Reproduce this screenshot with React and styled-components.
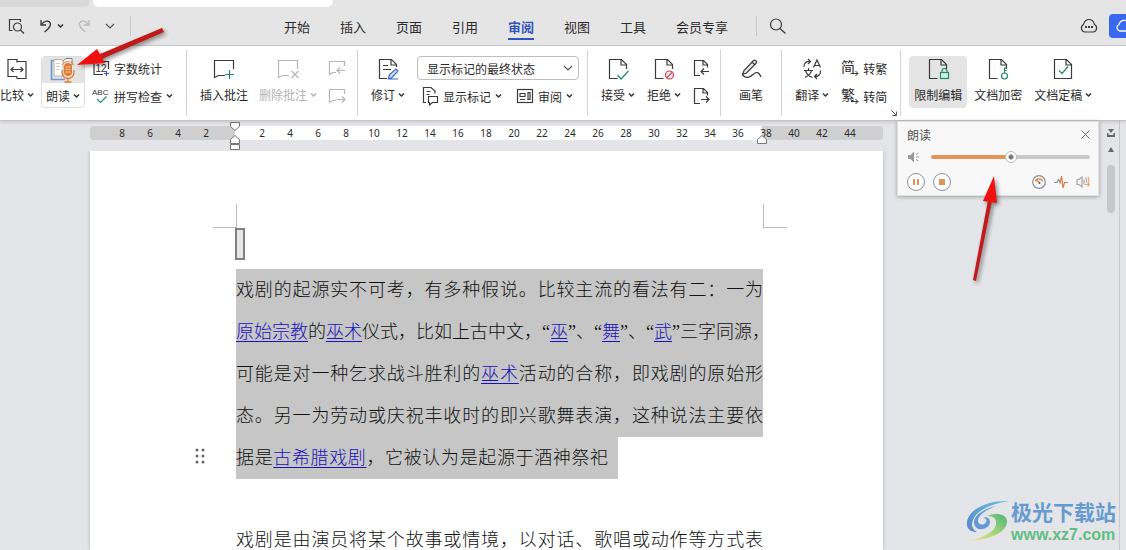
import React, { useState } from 'react'
import styled, { createGlobalStyle, css } from 'styled-components'

const Global = createGlobalStyle`
  * {
    box-sizing: border-box;
  }
  body {
    margin: 0;
    font-family: 'Noto Sans CJK SC', sans-serif;
    font-size: 12px;
    color: #2b2b2b;
    background: #e4e5e8;
  }
  button, select, input {
    font: inherit;
    color: inherit;
    margin: 0;
  }
  svg {
    flex: none;
  }
`

const Window = styled.div`
  position: relative;
  display: flex;
  flex-direction: column;
  width: 100%;
  height: 100vh;
  overflow: hidden;
`

/* ---------- title strip ---------- */
const TitleStrip = styled.div`
  display: flex;
  gap: 3px;
  height: 7px;
  background: #e6e5e6;
`
const DocTab = styled.div`
  width: ${(p) => p.$width}px;
  height: 7px;
  background: ${(p) => (p.$active ? '#fff' : '#d9d9da')};
  border-radius: 0 0 6px ${(p) => (p.$active ? 6 : 0)}px;
`

/* ---------- menu row ---------- */
const MenuBar = styled.header`
  display: flex;
  align-items: center;
  height: 39px;
  background: #e6e5e6;
  border-bottom: 1px solid #cbcbcc;
`
const QuickAccess = styled.div`
  display: flex;
  align-items: center;
  width: 269px;
  padding-left: 8px;
`
const IconButton = styled.button`
  display: flex;
  align-items: center;
  justify-content: center;
  flex: none;
  width: ${(p) => p.$width || 18}px;
  height: 18px;
  padding: 0;
  border: 0;
  background: none;
  cursor: pointer;
  margin-right: ${(p) => p.$after || 0}px;
`
const MenuDivider = styled.span`
  width: 1px;
  height: 20px;
  background: #c6c6c7;
`
const Tabs = styled.nav`
  display: flex;
  align-items: stretch;
  height: 38px;
`
const Tab = styled.a`
  display: flex;
  align-items: center;
  position: relative;
  padding: 0 15px;
  font-size: 13px;
  white-space: nowrap;
  color: #2b2b2b;
  text-decoration: none;
  ${(p) =>
    p.$active &&
    css`
      color: #3156b8;
      font-weight: 700;
      &::after {
        content: '';
        position: absolute;
        left: 15px;
        right: 15px;
        bottom: 5px;
        height: 2px;
        background: #3156b8;
      }
    `}
`
const MenuRight = styled.div`
  display: flex;
  align-items: center;
  margin-left: auto;
`
const CloudButton = styled.button`
  display: flex;
  align-items: center;
  width: 17px;
  height: 24px;
  padding: 0 0 0 6px;
  overflow: hidden;
  border: 0;
  border-radius: 4px 0 0 4px;
  background: #3a68f0;
`

/* ---------- ribbon ---------- */
const Ribbon = styled.div`
  position: relative;
  z-index: 2;
  display: flex;
  flex: none;
  height: 75px;
  padding-top: 4px;
  background: #fff;
  border-bottom: 1px solid #c4c4c6;
  box-shadow: 0 1px 3px rgba(0, 0, 0, 0.14);
`
const Group = styled.div`
  display: flex;
  position: relative;
  flex: none;
  height: 66px;
  gap: ${(p) => p.$gap || 12}px;
  padding: 6px ${(p) => (p.$end === undefined ? 13 : p.$end)}px 0 ${(p) => (p.$start === undefined ? 13 : p.$start)}px;
  border-right: ${(p) => (p.$last ? 0 : 1)}px solid #d2d2d2;
`
const BigButton = styled.button`
  display: flex;
  flex-direction: column;
  align-items: center;
  height: 52px;
  padding: 0 ${(p) => p.$pad || 0}px;
  border: 0;
  border-radius: 4px;
  background: ${(p) => (p.$pressed ? '#e4e4e4' : 'none')};
  color: ${(p) => (p.disabled ? '#b3b3b3' : '#2b2b2b')};
  white-space: nowrap;
`
const SplitButton = styled(BigButton)`
  width: 44px;
  border: 1px solid #dedede;
  padding: 0;
  overflow: hidden;
`
const IconSlot = styled.span`
  display: flex;
  align-items: center;
  justify-content: center;
  width: 100%;
  height: 27px;
  background: ${(p) => (p.$shaded ? '#e4e4e4' : 'none')};
`
const LabelRow = styled.span`
  display: flex;
  align-items: center;
  gap: 3px;
  height: 26px;
  line-height: 26px;
`
const Stack = styled.div`
  display: flex;
  flex-direction: column;
  gap: 4px;
`
const StackRow = styled.div`
  display: flex;
  align-items: center;
  gap: ${(p) => p.$gap || 0}px;
  height: 24px;
`
const SmallButton = styled.button`
  display: flex;
  align-items: center;
  gap: 4px;
  height: 24px;
  padding: 0;
  border: 0;
  background: none;
  white-space: nowrap;
`
const SelectBox = styled.div`
  position: relative;
  width: 162px;
  height: 24px;
  svg {
    position: absolute;
    right: 6px;
    top: 8px;
    pointer-events: none;
  }
`
const Select = styled.select`
  appearance: none;
  width: 100%;
  height: 24px;
  padding: 0 20px 0 9px;
  border: 1px solid #bdbdbd;
  border-radius: 4px;
  background: #fff;
`
const Launcher = styled.button`
  position: absolute;
  right: 3px;
  bottom: 0;
  display: flex;
  padding: 0;
  border: 0;
  background: none;
`

/* ---------- workspace ---------- */
const Workspace = styled.main`
  display: grid;
  grid-template-columns: 90px minmax(0, 793px) minmax(202px, 1fr) 17px 6px;
  flex: 1;
  min-height: 0;
  background: #e4e5e8;
`
const Editor = styled.div`
  grid-column: 2;
  display: flex;
  flex-direction: column;
  min-height: 0;
`
const Ruler = styled.div`
  position: relative;
  display: flex;
  align-items: center;
  flex: none;
  height: 14px;
  margin: 5px 0 11px;
  padding-left: 18px;
  border-radius: 4px;
  background: linear-gradient(to right, #cfcfcf 145px, #fff 145px, #fff calc(100% - 121px), #cfcfcf calc(100% - 121px));
`
const Tick = styled.span`
  flex: none;
  width: 28px;
  text-align: center;
  font: 10px/14px 'Noto Sans', sans-serif;
`
const Marker = styled.svg`
  position: absolute;
  top: -5px;
  ${(p) => (p.$right ? 'right: 115px' : 'left: 139px')};
`
const Page = styled.article`
  position: relative;
  flex: 1;
  min-height: 0;
  padding: 53px 120px 0 146px;
  background: #fff;
  box-shadow: 0 0 4px rgba(0, 0, 0, 0.22);
  clip-path: inset(0 -6px 0 -6px);
`
const Corners = styled.div`
  display: flex;
  justify-content: space-between;
  height: 24px;
  margin: 0 -24px 0 -23px;
`
const Corner = styled.span`
  width: 24px;
  border-bottom: 1px solid #b9b9b9;
  ${(p) => (p.$right ? 'border-left' : 'border-right')}: 1px solid #b9b9b9;
`
const FieldBox = styled.div`
  width: 10px;
  height: 32px;
  margin: 0 0 9px -1px;
  border: 2px solid #808080;
  background: #e8e8e8;
`
const Paragraph = styled.p`
  margin: 0 0 40px;
  font-family: 'Liberation Serif', 'Noto Sans CJK SC', serif;
  font-size: 18px;
  font-weight: 300;
  line-height: 42px;
  color: #111;
`
const Line = styled.span`
  display: block;
  height: 42px;
  width: ${(p) => (p.$short ? '72.5%' : '100%')};
  padding-right: ${(p) => (p.$short ? 10 : 0)}px;
  text-align: justify;
  text-align-last: justify;
  white-space: nowrap;
  background: ${(p) => (p.$selected ? '#c6c6c6' : 'none')};
`
const DocLink = styled.a`
  color: #1a12b8;
  text-decoration: underline;
  text-decoration-thickness: 1px;
  text-underline-offset: 3px;
`
const DragHandle = styled.svg`
  position: absolute;
  left: 105px;
  top: 297px;
`

/* ---------- read aloud panel ---------- */
const Panel = styled.section`
  position: relative;
  z-index: 3;
  grid-column: 3;
  width: 202px;
  height: 75px;
  margin-left: 14px;
  padding: 4px 8px 0 9px;
  background: #f8f8f8;
  border: 1px solid #e0e0e0;
  box-shadow: 0 1px 4px rgba(0, 0, 0, 0.3);
  color: #555;
`
const PanelRow = styled.div`
  display: flex;
  align-items: center;
  height: ${(p) => p.$height}px;
  gap: ${(p) => p.$gap || 0}px;
`
const PanelTitle = styled.span`
  flex: 1;
`
const Slider = styled.input`
  appearance: none;
  flex: 1;
  min-width: 0;
  height: 12px;
  background: none;
  &::-webkit-slider-runnable-track {
    height: 4px;
    border-radius: 2px;
    background: linear-gradient(to right, #e2935a 50%, #c9c9c9 50%);
  }
  &::-webkit-slider-thumb {
    appearance: none;
    width: 12px;
    height: 12px;
    margin-top: -4px;
    border: 1px solid #bcbcbc;
    border-radius: 50%;
    background: radial-gradient(circle, #777 2px, #fff 3px);
  }
`
const RoundButton = styled.button`
  display: flex;
  align-items: center;
  justify-content: center;
  width: 18px;
  height: 18px;
  padding: 0;
  border: 1px solid #8a8f9a;
  border-radius: 50%;
  background: #fff;
`
const Spacer = styled.span`
  flex: 1;
`

const ScrollColumn = styled.div`
  grid-column: 4;
  display: flex;
  flex-direction: column;
  align-items: center;
  padding-top: 7px;
  border-right: 1px solid #c9cacd;
`
const ScrollThumb = styled.span`
  width: 8px;
  height: 48px;
  margin-top: 11px;
  border-radius: 4px;
  background: #c6c7c9;
`

/* ---------- overlays ---------- */
const ArrowLayer = styled.svg`
  position: absolute;
  z-index: 5;
  left: ${(p) => p.$x}px;
  top: ${(p) => p.$y}px;
  pointer-events: none;
  overflow: visible;
  filter: drop-shadow(2px 2px 2px rgba(0, 0, 0, 0.45));
`
const Watermark = styled.div`
  position: absolute;
  z-index: 4;
  right: 10px;
  bottom: 5px;
  display: flex;
  align-items: center;
`
const WatermarkText = styled.div`
  display: flex;
  flex-direction: column;
`
const SiteName = styled.span`
  font-size: 21px;
  font-weight: 700;
  line-height: 28px;
  color: #659bd0;
`
const SiteUrl = styled.span`
  font: 700 16px/20px 'Liberation Sans', sans-serif;
  color: #62bd85;
`

/* ---------- icons ---------- */
const Icon = ({ size = 24, color = '#3a3a3a', children }) => (
  <svg width={size} height={size} viewBox={`0 0 ${size} ${size}`} fill="none" stroke={color} strokeWidth="1.2">
    {children}
  </svg>
)
const Caret = ({ color = '#333' }) => (
  <svg width="7" height="6" viewBox="0 0 7 6" fill="none" stroke={color} strokeWidth="1.5">
    <path d="M1 1.5 3.5 4 6 1.5" />
  </svg>
)
const Chevron = () => (
  <svg width="10" height="8" viewBox="0 0 10 8" fill="none" stroke="#555" strokeWidth="1.2">
    <path d="M1 2l4 4 4-4" />
  </svg>
)
const DocOutline = () => (
  <>
    <path d="M11.5 21.5H3.5V2.5H15.5L20.5 7.5V12" />
    <path d="M15 2.5V8H20.5" />
  </>
)
const BubbleSmall = ({ next }) => (
  <Icon size={18} color="#b5b5b5">
    <path d="M16.5 7V2.5H1.5V15.5L4.5 13.5H8" />
    {next ? <path d="M9 12.5h8M14 9.5l3 3-3 3" /> : <path d="M17 11.5H9M12 8.5l-3 3 3 3" />}
  </Icon>
)
const PageSmall = ({ next }) => (
  <Icon size={18}>
    <path d="M7 16.5H1.5V1.5H10.5L14.5 5.5V8.5M10 1.5V6H14.5" />
    {next ? <path d="M8 12.5h8M13 9.5l3 3-3 3" /> : <path d="M16 12.5H8M11 9.5l-3 3 3 3" />}
  </Icon>
)
const HanArrow = ({ char }) => (
  <svg width="18" height="18" viewBox="0 0 18 18" fill="none" overflow="visible">
    <text x="0" y="13" fontSize="14" fill="#2b2b2b" fontFamily="Noto Sans CJK SC">
      {char}
    </text>
    <path d="M10 14.5h7M14.5 12l2.5 2.5-2.5 2.5" stroke="#333" />
  </svg>
)

const tabs = ['开始', '插入', '页面', '引用', '审阅', '视图', '工具', '会员专享']
const ticks = [8, 6, 4, 2, '', ...Array.from({ length: 22 }, (_, i) => (i + 1) * 2)]

const Tool = ({ icon, label, caret, ...rest }) => (
  <BigButton {...rest}>
    <IconSlot>{icon}</IconSlot>
    <LabelRow>
      {label}
      {caret && <Caret color={rest.disabled ? '#b3b3b3' : '#333'} />}
    </LabelRow>
  </BigButton>
)

const Menu = () => (
  <MenuBar>
    <QuickAccess>
      <IconButton aria-label="打印预览" $after={14}>
        <Icon size={18}>
          <path d="M4.5 13.5H1.5V2.5H12.5V5" />
          <circle cx="9.5" cy="10" r="4" />
          <path d="M12.5 13l3.5 3.5" />
        </Icon>
      </IconButton>
      <IconButton aria-label="撤销" $width={12} $after={2}>
        <svg width="12" height="16" viewBox="0 0 12 16" fill="none" stroke="#3a3a3a" strokeWidth="1.3">
          <path d="M1 2v5h5M1.5 6.5C4 2.5 9 2 10.3 5 11.5 8.5 8 11 4.5 14" />
        </svg>
      </IconButton>
      <IconButton aria-label="撤销列表" $width={12} $after={12}>
        <Caret />
      </IconButton>
      <IconButton aria-label="恢复" $width={12} $after={14}>
        <svg width="12" height="16" viewBox="0 0 12 16" fill="none" stroke="#b9b9b9" strokeWidth="1.3">
          <path d="M11 2v5H6M10.5 6.5C8 2.5 3 2 1.7 5 .5 8.5 4 11 7.5 14" />
        </svg>
      </IconButton>
      <IconButton aria-label="自定义" $width={12} $after={14}>
        <Chevron />
      </IconButton>
      <MenuDivider />
    </QuickAccess>
    <Tabs>
      {tabs.map((t) => (
        <Tab key={t} href="#" $active={t === '审阅'}>
          {t}
        </Tab>
      ))}
    </Tabs>
    <IconButton as="span" $width={26}>
      <MenuDivider />
    </IconButton>
    <IconButton aria-label="搜索" $width={18}>
      <Icon size={18}>
        <circle cx="7" cy="7.5" r="5.5" />
        <path d="M11 11.5l5.5 5" />
      </Icon>
    </IconButton>
    <MenuRight>
      <IconButton aria-label="云状态" $after={11}>
        <Icon size={18}>
          <path d="M5 15a4 4 0 0 1-1.5-7.5C4.5 4 6.5 2.5 9 2.5S13.5 4 14.5 7.5A4 4 0 0 1 13 15z" />
          <path d="M5 10h2M8 10h2M11 10h2" strokeWidth="1.8" />
        </Icon>
      </IconButton>
      <CloudButton aria-label="分享">
        <svg width="20" height="16" viewBox="0 0 20 16" fill="none" stroke="#fff" strokeWidth="1.3">
          <path d="M12 13H4.5A3.5 3.5 0 0 1 4 6.5 5.5 5.5 0 0 1 14 5" />
        </svg>
      </CloudButton>
    </MenuRight>
  </MenuBar>
)

const ReadIcon = () => (
  <svg width="26" height="26" viewBox="0 0 26 26" fill="none">
    <path d="M4 3.5H1.5V22.5H15" stroke="#6f97cf" strokeWidth="1.6" />
    <path d="M4 2.5H11L13 4V20L11 19H4z" fill="#fff" stroke="#b9b4aa" />
    <path d="M13 4l3-2.5h6V8" fill="#fff" stroke="#777" />
    <path d="M6 6.5h4M6 9.5h4M6 12.5h4" stroke="#e8c9a6" />
    <path d="M12 8C13.5 3.5 22 3.5 24 8" stroke="#e2823c" />
    <rect x="14" y="6" width="8" height="13" rx="4" fill="#e2782f" />
    <path d="M15.5 10h5M15.5 12.5h5M15.5 15h5" stroke="#f9d0ae" />
    <path d="M12 13v2.5a6 6 0 0 0 12 0V13M18 21.5V25M14.5 25h7" stroke="#e2782f" strokeWidth="1.3" />
  </svg>
)

const ReviewRibbon = () => {
  const [view, setView] = useState('final')
  return (
    <Ribbon>
      <Group $start={0} $gap={7}>
        <Tool
          label="比较"
          caret
          icon={
            <Icon>
              <path d="M12 5.5V2.5H3V19.5H12M12 4.5H21V21.5H12V19.5" />
              <path d="M6 12.5h12M8.5 10L6 12.5 8.5 15M15.5 10L18 12.5 15.5 15" />
            </Icon>
          }
        />
        <SplitButton>
          <IconSlot $shaded>
            <ReadIcon />
          </IconSlot>
          <LabelRow>
            朗读
            <Caret />
          </LabelRow>
        </SplitButton>
        <Stack>
          <SmallButton>
            <Icon size={18}>
              <path d="M11 15.5H2V2.5H16.5V10" />
              <text x="3.5" y="12.5" fontSize="10" fill="#333" stroke="none" fontFamily="Liberation Sans">
                12
              </text>
              <path d="M12 14.5h5M14.5 12v5" stroke="#3156b8" />
            </Icon>
            字数统计
          </SmallButton>
          <SmallButton>
            <Icon size={18}>
              <text x="0" y="8" fontSize="8" fill="#333" stroke="none" fontFamily="Liberation Sans">
                ABC
              </text>
              <path d="M5 12l3.5 3.5 6-6" stroke="#2c8a63" />
            </Icon>
            拼写检查
            <Caret />
          </SmallButton>
        </Stack>
      </Group>

      <Group $end={11} $gap={11}>
        <Tool
          label="插入批注"
          icon={
            <Icon>
              <path d="M21.5 12V3.5H2.5V20.5L6.5 18.5H13" />
              <path d="M13 17.5h9M17.5 13v9" stroke="#1f8a68" />
            </Icon>
          }
        />
        <Tool
          label="删除批注"
          caret
          disabled
          icon={
            <Icon color="#b5b5b5">
              <path d="M21.5 12V3.5H2.5V20.5L6.5 18.5H13" />
              <path d="M15.5 14l7 7M22.5 14l-7 7" />
            </Icon>
          }
        />
        <Stack>
          <SmallButton aria-label="上一条批注" disabled>
            <BubbleSmall />
          </SmallButton>
          <SmallButton aria-label="下一条批注" disabled>
            <BubbleSmall next />
          </SmallButton>
        </Stack>
      </Group>

      <Group $end={8}>
        <Tool
          label="修订"
          caret
          icon={
            <Icon>
              <path d="M11 21.5H3.5V2.5H15.5L20.5 7.5V10" />
              <path d="M15 2.5V8H20.5M7 8.5h5M7 12.5h8" />
              <path d="M12.5 21.5l1-4 6.5-5.5 2 2-6.5 7zM12 22h10" stroke="#3867d0" fill="#cfe0fa" />
            </Icon>
          }
        />
        <Stack>
          <SelectBox>
            <Select aria-label="显示状态" value={view} onChange={(e) => setView(e.target.value)}>
              <option value="final">显示标记的最终状态</option>
              <option value="origin">显示标记的原始状态</option>
            </Select>
            <Chevron />
          </SelectBox>
          <StackRow $gap={14}>
            <SmallButton>
              <Icon size={22}>
                <path d="M9 17.5H6.5V2.5H14L18 6V8.5M9.5 6.5h4M9.5 9.5h3" />
                <path d="M11.5 11.5h9v6h-5l-3 2.5v-2.5h-1z" />
              </Icon>
              显示标记
              <Caret />
            </SmallButton>
            <SmallButton>
              <Icon size={18}>
                <rect x="1.5" y="2.5" width="15" height="13" />
                <path d="M4 6.5h5v3h-5zM4 12.5h5M12 5.5h2v7h-2z" />
              </Icon>
              审阅
              <Caret />
            </SmallButton>
          </StackRow>
        </Stack>
      </Group>

      <Group $end={9}>
        <Tool
          label="接受"
          caret
          icon={
            <Icon>
              <DocOutline />
              <path d="M11.5 18l3.5 4 7.5-8" stroke="#1f8a68" />
            </Icon>
          }
        />
        <Tool
          label="拒绝"
          caret
          icon={
            <Icon>
              <DocOutline />
              <circle cx="17.5" cy="18" r="4" stroke="#c5424f" fill="#fdeaec" />
              <path d="M14.7 20.8l5.6-5.6" stroke="#c5424f" />
            </Icon>
          }
        />
        <Stack>
          <SmallButton aria-label="上一条修订">
            <PageSmall />
          </SmallButton>
          <SmallButton aria-label="下一条修订">
            <PageSmall next />
          </SmallButton>
        </Stack>
      </Group>

      <Group $start={18} $end={18}>
        <Tool
          label="画笔"
          icon={
            <Icon>
              <path d="M3.5 17.5L5 13.5 14.5 3.5Q16.5 2.5 17.5 4.5L17 6.5 7.5 16zM13 5l3 3" fill="#e6e6e6" />
              <path d="M3.5 18C7 22 11 20.5 14 17.5S20 14.5 22 20" />
            </Icon>
          }
        />
      </Group>

      <Group>
        <Tool
          label="翻译"
          caret
          icon={
            <Icon>
              <path d="M13.5 10.5L17 3 20.5 10.5M14.5 8.5h5" />
              <path d="M4 13.5h9M8.5 11v2.5M5 20.5C9 18.5 11 16.5 11.5 13.5M5.5 13.5C6.5 17 9 19.5 12.5 20.5" />
              <path d="M4 10C3.5 6.5 6 4 10 4.5M8 2l2.5 2.5L8 7M20.5 13.5C21 17 18.5 20 14.5 19.5M17 17l-2.5 2.5L17 22" />
            </Icon>
          }
        />
        <Stack>
          <SmallButton>
            <HanArrow char="简" />
            转繁
          </SmallButton>
          <SmallButton>
            <HanArrow char="繁" />
            转简
          </SmallButton>
        </Stack>
        <Launcher aria-label="更多选项">
          <svg width="6" height="6" viewBox="0 0 6 6" fill="none" stroke="#555">
            <path d="M.5.5l4.5 4.5M1.5 5.5h4V1.5" />
          </svg>
        </Launcher>
      </Group>

      <Group $start={8} $gap={7} $last>
        <Tool
          label="限制编辑"
          $pressed
          $pad={5}
          icon={
            <Icon>
              <DocOutline />
              <rect x="14.5" y="15.5" width="8" height="6" stroke="#1f8a68" fill="#d5efe5" />
              <path d="M16 15.5V14a2.5 2.5 0 0 1 5 0v1.5" stroke="#1f8a68" />
            </Icon>
          }
        />
        <Tool
          label="文档加密"
          icon={
            <Icon>
              <DocOutline />
              <circle cx="18.5" cy="19" r="3" stroke="#1f8a68" />
              <path d="M18.5 16V10.5M18.5 11h2.5M18.5 13.5h2" stroke="#1f8a68" />
            </Icon>
          }
        />
        <Tool
          label="文档定稿"
          caret
          $pad={5}
          icon={
            <Icon>
              <path d="M3.5 2.5H15.5L20.5 7.5V21.5H3.5zM15 2.5V8H20.5" />
              <path d="M8 13.5l3 3 6-7" stroke="#1f8a68" />
            </Icon>
          }
        />
      </Group>
    </Ribbon>
  )
}

const ReadPanel = () => {
  const [progress, setProgress] = useState(50)
  return (
    <Panel>
      <PanelRow $height={16}>
        <PanelTitle>朗读</PanelTitle>
        <IconButton aria-label="关闭" $width={9}>
          <svg width="9" height="9" viewBox="0 0 9 9" stroke="#666">
            <path d="M.5.5l8 8M8.5.5l-8 8" />
          </svg>
        </IconButton>
      </PanelRow>
      <PanelRow $height={30} $gap={10}>
        <svg width="14" height="12" viewBox="0 0 14 12" fill="#999">
          <path d="M1 4h2.5L7 .5v11L3.5 8H1z" />
          <path d="M9 3.5L11.5 2M9 6h3M9 8.5l2.5 1.5" stroke="#999" />
        </svg>
        <Slider
          type="range"
          aria-label="朗读进度"
          value={progress}
          onChange={(e) => setProgress(Number(e.target.value))}
        />
      </PanelRow>
      <PanelRow $height={20} $gap={8}>
        <RoundButton aria-label="暂停">
          <svg width="8" height="8" viewBox="0 0 8 8" fill="#e2935a">
            <path d="M1 1h2v6H1zM5 1h2v6H5z" />
          </svg>
        </RoundButton>
        <RoundButton aria-label="停止">
          <svg width="8" height="8" viewBox="0 0 8 8" fill="#e2935a">
            <path d="M1 1h6v6H1z" />
          </svg>
        </RoundButton>
        <Spacer />
        <IconButton aria-label="语速" $width={14}>
          <Icon size={14} color="#8a8f9a">
            <circle cx="7" cy="7" r="6.3" />
            <path d="M3.5 6.5C4 3 10 3 10.5 6.5M4.5 5l3 2.5" stroke="#e2793c" />
            <circle cx="7.5" cy="8" r="1" fill="#555" stroke="none" />
          </Icon>
        </IconButton>
        <IconButton aria-label="语调" $width={14}>
          <Icon size={14} color="#8a8f9a">
            <path d="M0 7.5h3l1.5-3 2 3.5" />
            <path d="M6 8.5L7.5 1l1.5 12L10.5 7.5H14" stroke="#e2793c" />
          </Icon>
        </IconButton>
        <IconButton aria-label="音量" $width={14}>
          <Icon size={14} color="#a5a5a5">
            <path d="M1 4.5h2L6 2v10L3 9.5H1z" />
            <path d="M8 4.5v5M9.5 2.5Q11.5 5 10.5 7.5" />
            <path d="M12 1.5q1.5 3 .5 6M8.5 9.5h5M11.5 7.5l2 2-2 2" stroke="#e9a57a" />
          </Icon>
        </IconButton>
      </PanelRow>
    </Panel>
  )
}

const Logo = () => (
  <svg width="45" height="42" viewBox="0 0 45 42">
    <defs>
      <linearGradient id="swirlBlue" x1="0" y1="1" x2="1" y2="0">
        <stop offset="0" stopColor="#5a86c6" />
        <stop offset="1" stopColor="#62c0e8" />
      </linearGradient>
      <linearGradient id="swirlGreen" x1="0" y1="1" x2="1" y2="0">
        <stop offset="0" stopColor="#f0e08a" />
        <stop offset="0.5" stopColor="#a3d477" />
        <stop offset="1" stopColor="#4db57c" />
      </linearGradient>
    </defs>
    <path
      d="M43 1C24 0 3 8 1 22c-1 7 4 10 10 10-5-3-6-7-4-12C11 10 25 4 43 1z"
      fill="url(#swirlBlue)"
    />
    <path
      d="M30 6C18 9 8 15 8 22c0 5 4 8 8 7 5 0 8-4 8-7 0-4-4-6-7-4 3 0 4 2 3 4-2 4-8 3-8-1 0-6 8-11 18-15z"
      fill="#6499d3"
    />
    <path d="M21 16c8-4 20-2 20 5 0 11-15 18-37 20 15-4 27-10 26-19 0-4-4-6-9-6z" fill="url(#swirlGreen)" />
  </svg>
)

const App = () => {
  return (
    <Window>
      <Global />
      <TitleStrip>
        <DocTab $width={90} />
        <DocTab $width={240} $active />
      </TitleStrip>
      <Menu />
      <ReviewRibbon />
      <Workspace>
        <Editor>
          <Ruler>
            {ticks.map((t, i) => (
              <Tick key={i}>{t}</Tick>
            ))}
            <Marker width="12" height="30" viewBox="0 0 12 30" fill="#fff" stroke="#777">
              <path d="M1.5 1.5h9v4L6 9.5 1.5 5.5zM6 14.5l4.5 4v4h-9v-4zM1.5 23.5h9v5h-9z" />
            </Marker>
            <Marker $right width="12" height="30" viewBox="0 0 12 30" fill="#fff" stroke="#777">
              <path d="M6 14.5l4.5 4v4h-9v-4z" />
            </Marker>
          </Ruler>
          <Page>
            <Corners>
              <Corner />
              <Corner $right />
            </Corners>
            <FieldBox />
            <Paragraph>
              <Line $selected>戏剧的起源实不可考，有多种假说。比较主流的看法有二：一为</Line>
              <Line $selected>
                <DocLink href="#">原始宗教</DocLink>的<DocLink href="#">巫术</DocLink>仪式，比如上古中文，“
                <DocLink href="#">巫</DocLink>”、“<DocLink href="#">舞</DocLink>”、“<DocLink href="#">武</DocLink>
                ”三字同源，
              </Line>
              <Line $selected>
                可能是对一种乞求战斗胜利的<DocLink href="#">巫术</DocLink>活动的合称，即戏剧的原始形
              </Line>
              <Line $selected>态。另一为劳动或庆祝丰收时的即兴歌舞表演，这种说法主要依</Line>
              <Line $selected $short>
                据是<DocLink href="#">古希腊戏剧</DocLink>，它被认为是起源于酒神祭祀
              </Line>
            </Paragraph>
            <Paragraph>
              <Line>戏剧是由演员将某个故事或情境，以对话、歌唱或动作等方式表</Line>
            </Paragraph>
            <DragHandle width="10" height="16" viewBox="0 0 10 16" fill="#666">
              {[2, 8, 14].map((y) => (
                <React.Fragment key={y}>
                  <circle cx="2" cy={y} r="1.5" />
                  <circle cx="8" cy={y} r="1.5" />
                </React.Fragment>
              ))}
            </DragHandle>
          </Page>
        </Editor>
        <ReadPanel />
        <ScrollColumn>
          <svg width="8" height="26" viewBox="0 0 8 26" fill="#666">
            <path d="M1 1h6L4 5zM0 5h1.5v2h5V5H8v4H0zM1 24l3-5 3 5z" />
          </svg>
          <ScrollThumb />
        </ScrollColumn>
      </Workspace>

      <ArrowLayer $x={77} $y={28} width="88" height="38" viewBox="0 0 88 38">
        <path d="M85 0l2 4L25 31l-2-5z" fill="#c01a1a" />
        <path d="M20 21l8 14L0 37z" fill="#f01010" />
      </ArrowLayer>
      <ArrowLayer $x={973} $y={176} width="24" height="106" viewBox="0 0 24 106">
        <path d="M15 24l4 1L3 105l-3-1z" fill="#c01a1a" />
        <path d="M21 0l3 27-14-2z" fill="#f01010" />
      </ArrowLayer>
      <Watermark>
        <Logo />
        <WatermarkText>
          <SiteName>极光下载站</SiteName>
          <SiteUrl>www.xz7.com</SiteUrl>
        </WatermarkText>
      </Watermark>
    </Window>
  )
}

export default App
